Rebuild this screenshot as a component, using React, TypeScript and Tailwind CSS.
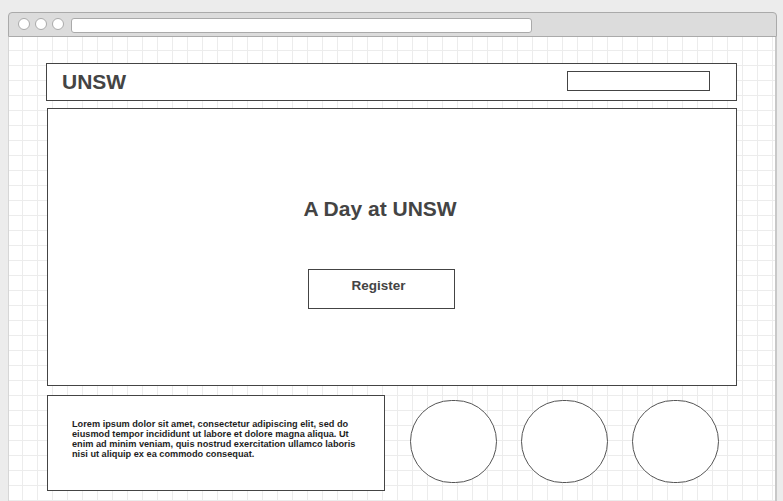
const grid =
  "bg-[linear-gradient(to_right,#ececec_1px,transparent_1px),linear-gradient(to_bottom,#ececec_1px,transparent_1px)] bg-[size:15px_15px] bg-[position:13px_13px]";

function TitleBar() {
  return (
    <div className="flex h-[25px] items-start gap-[5px] rounded-t-[4px] border border-b border-[#aaaaaa] bg-[#dcdcdc] pl-[9px] pt-[5px]">
      <span className="h-[12px] w-[12px] rounded-full border border-[#aaaaaa] bg-white" />
      <span className="h-[12px] w-[12px] rounded-full border border-[#aaaaaa] bg-white" />
      <span className="h-[12px] w-[12px] rounded-full border border-[#aaaaaa] bg-white" />
      <span className="ml-[2px] h-[15px] w-[461px] rounded-[3px] border border-[#aaaaaa] bg-white" />
    </div>
  );
}

function Header() {
  return (
    <header className="flex h-[38px] w-[691px] items-center justify-between border border-[#444444] bg-white pl-[15px] pr-[26px]">
      <span className="text-[21px] font-bold leading-[24px] text-[#444444]">UNSW</span>
      <span className="mb-[3px] h-[20px] w-[143px] border border-[#444444] bg-white" />
    </header>
  );
}

function Hero() {
  return (
    <section className="ml-px mt-[7px] flex h-[278px] w-[690px] flex-col items-center border border-[#444444] bg-white pr-[24px] pt-[88px]">
      <h1 className="text-[21px] font-bold leading-[24px] text-[#444444]">A Day at UNSW</h1>
      <button className="ml-[3px] mt-[48px] h-[40px] w-[147px] border border-[#444444] bg-white pb-[6px] pr-[6px] text-[13.5px] font-bold text-[#444444]">
        Register
      </button>
    </section>
  );
}

function Footer() {
  return (
    <div className="ml-px mt-[9px] flex items-start">
      <div className="h-[96px] w-[338px] border border-[#444444] bg-white pl-[24px] pt-[23px]">
        <p className="w-[290px] text-[9.2px] font-bold leading-[10px] text-[#1e1e1e]">
          Lorem ipsum dolor sit amet, consectetur adipiscing elit, sed do eiusmod tempor incididunt ut labore et dolore
          magna aliqua. Ut enim ad minim veniam, quis nostrud exercitation ullamco laboris nisi ut aliquip ex ea commodo
          consequat.
        </p>
      </div>
      <div className="ml-[25px] mt-[5px] flex gap-[24px]">
        {[0, 1, 2].map((i) => (
          <div key={i} className="h-[83px] w-[87px] rounded-full border border-[#555555] bg-white" />
        ))}
      </div>
    </div>
  );
}

export default function App() {
  return (
    <div className="h-screen overflow-hidden bg-[#ececec] pl-[8px] pt-[12px] font-['Liberation_Sans',Arial,sans-serif]">
      <div className="w-[769px]">
        <TitleBar />
        <div className={`h-[480px] border-l border-r-2 border-l-[#d6d6d6] border-r-[#c8c8c8] bg-white ${grid} pl-[37px] pt-[26px]`}>
          <Header />
          <Hero />
          <Footer />
        </div>
      </div>
    </div>
  );
}
